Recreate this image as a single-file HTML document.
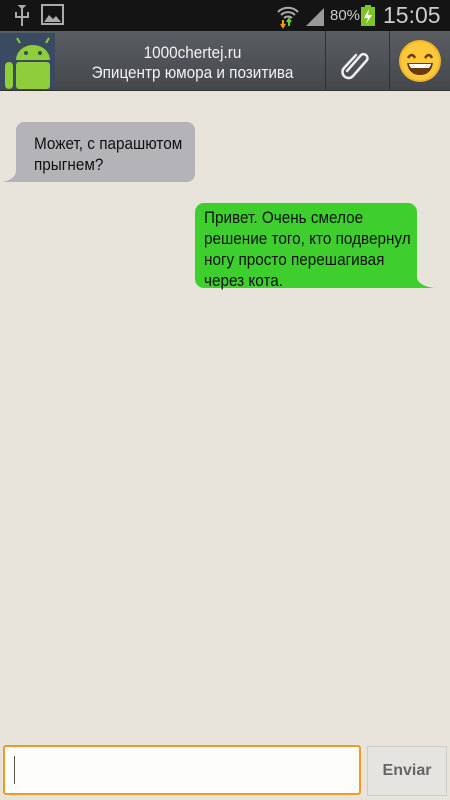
<!DOCTYPE html>
<html><head><meta charset="utf-8"><style>
*{margin:0;padding:0;box-sizing:border-box}
body{width:450px;height:800px;overflow:hidden;background:#e8e4db;font-family:"Liberation Sans",sans-serif;position:relative}
.sb{position:absolute;left:0;top:0;width:450px;height:31px;background:#141414;color:#ccc}
.hd{position:absolute;left:0;top:31px;width:450px;height:60px;background:linear-gradient(#5a5e63,#44484d);border-bottom:1px solid #333}
.b{position:absolute;font-size:17px;line-height:21px;color:#111;transform:scaleX(0.9);transform-origin:0 0;white-space:nowrap}
</style></head><body>
<div class="sb">
<svg width="450" height="31" style="position:absolute;left:0;top:0">
<g stroke="#aaa" stroke-width="2" fill="none"><path d="M22 6v20M16 12v5h12v-5M22 8l-2-2h4z"/></g>
<rect x="42" y="5" width="21" height="19" fill="none" stroke="#aaa" stroke-width="2"/>
<path d="M44 22l5-7 4 4 3-3 5 6z" fill="#aaa"/>
<path d="M278 12a14 14 0 0 1 20 0M281 15a10 10 0 0 1 14 0M284 18a6 6 0 0 1 8 0" stroke="#aaa" stroke-width="2" fill="none"/>
<path d="M283 20v6M281 24l2 3 2-3" stroke="#f39c12" stroke-width="2" fill="none"/>
<path d="M289 26v-6M287 22l2-3 2 3" stroke="#6c3" stroke-width="2" fill="none"/>
<path d="M306 26l18-18v18z" fill="#999"/>
<rect x="361" y="7" width="14" height="19" fill="#7cc427"/><rect x="365" y="5" width="6" height="2" fill="#7cc427"/>
<path d="M369 9l-5 9h4l-2 6 6-9h-4z" fill="#fff"/>
</svg>
<div style="position:absolute;left:330px;top:7px;font-size:15px;color:#ccc">80%</div>
<div style="position:absolute;left:383px;top:2px;font-size:23px;color:#ccc">15:05</div>
</div>
<div class="hd">
<div style="position:absolute;left:0;top:2px;width:55px;height:56px;background:#3a4a60"></div>
<svg width="55" height="60" style="position:absolute;left:0;top:0">
<path d="M16 29a17 15 0 0 1 34 0z" fill="#8fcd3a"/>
<circle cx="26" cy="22" r="2" fill="#3a4a60"/><circle cx="40" cy="22" r="2" fill="#3a4a60"/>
<path d="M20 12l-3-5M46 12l3-5" stroke="#8fcd3a" stroke-width="2"/>
<rect x="16" y="31" width="34" height="27" rx="3" fill="#8fcd3a"/>
<rect x="5" y="31" width="8" height="27" rx="4" fill="#8fcd3a"/>
</svg>
<div style="position:absolute;left:60px;width:265px;top:12px;text-align:center;color:#f2f2f2;font-size:17px;line-height:20px;transform:scaleX(0.9)">1000chertej.ru<br>Эпицентр юмора и позитива</div>
<div style="position:absolute;left:325px;top:0;width:1px;height:60px;background:#2e3135"></div>
<div style="position:absolute;left:389px;top:0;width:1px;height:60px;background:#2e3135"></div>
<svg width="40" height="40" style="position:absolute;left:337px;top:10px"><path d="M10 30l14-16a4 4 0 0 1 6 5l-14 16a6 6 0 0 1-9-8l12-13" stroke="#eee" stroke-width="2.5" fill="none" stroke-linecap="round"/></svg>
<svg width="50" height="50" style="position:absolute;left:395px;top:5px"><circle cx="25" cy="25" r="21" fill="#f5b52b"/><circle cx="25" cy="25" r="19" fill="#fbc93a"/><path d="M13 22q4-6 7 0M30 22q4-6 7 0" stroke="#6b3a10" stroke-width="2.5" fill="none"/><path d="M12 27h26q-2 12-13 12t-13-12z" fill="#6b3a10"/><path d="M14 28h22q-1 4-3 4H17q-2 0-3-4z" fill="#fff"/></svg>
</div>
<svg width="450" height="300" style="position:absolute;left:0;top:110px">
<path d="M24 12h163a8 8 0 0 1 8 8v44a8 8 0 0 1-8 8H2q12-2 14-10V20a8 8 0 0 1 8-8z" fill="#b4b3b8"/>
<path d="M204 93h204a9 9 0 0 1 9 9v66q2 8 17 10H204a9 9 0 0 1-9-9v-67a9 9 0 0 1 9-9z" fill="#3ecf2f"/>
</svg>
<div class="b" style="left:34px;top:133px">Может, с парашютом<br>прыгнем?</div>
<div class="b" style="left:204px;top:207px">Привет. Очень смелое<br>решение того, кто подвернул<br>ногу просто перешагивая<br>через кота.</div>
<div style="position:absolute;left:3px;top:745px;width:358px;height:50px;border:2px solid #f19a27;border-radius:3px;background:#fdfdfc"></div>
<div style="position:absolute;left:14px;top:756px;width:1px;height:28px;background:#555"></div>
<div style="position:absolute;left:367px;top:746px;width:80px;height:50px;background:#e6e4e0;border:1px solid #cfcdc8;color:#666;font-weight:bold;font-size:16px;text-align:center;line-height:48px">Enviar</div>
</body></html>
